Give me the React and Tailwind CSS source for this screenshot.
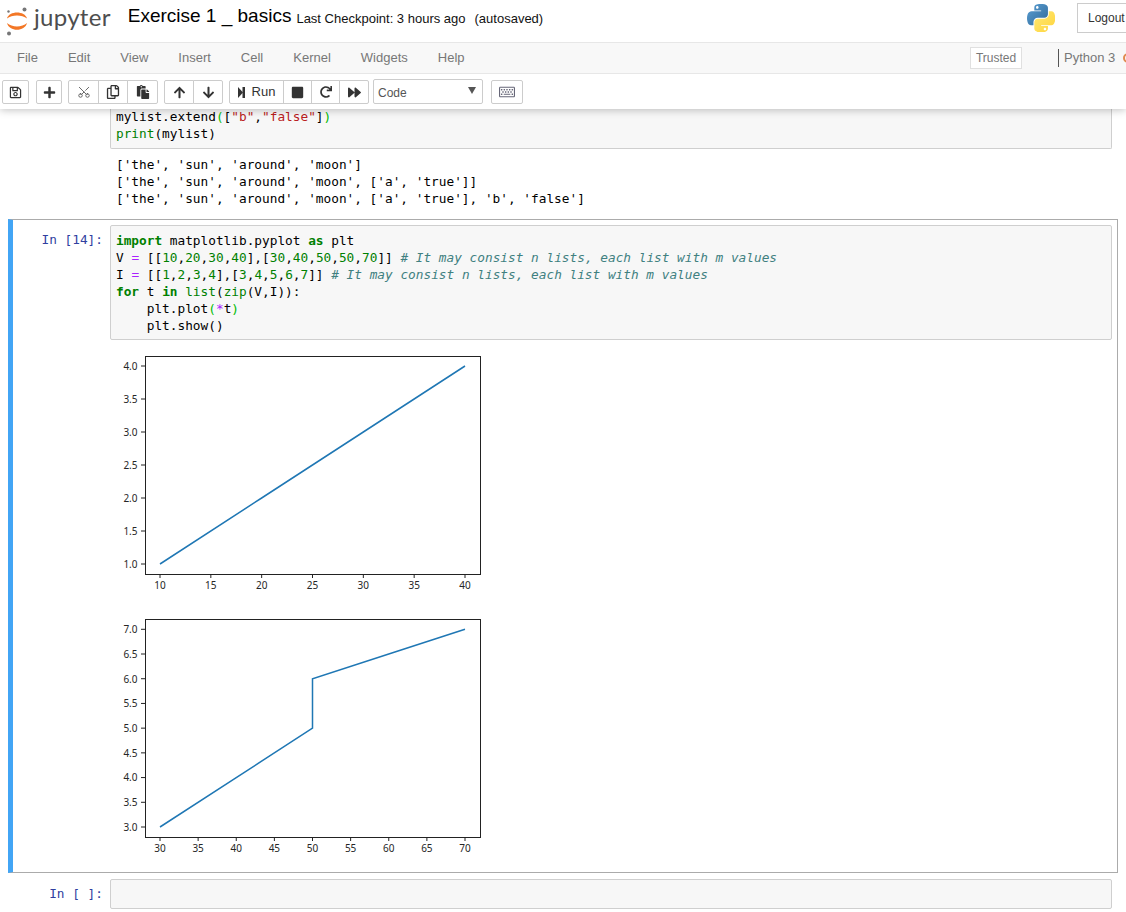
import React from 'react';
import { FaRegSave, FaPlus, FaRegCopy, FaPaste, FaArrowUp, FaArrowDown, FaStop, FaRedo, FaForward, FaRegKeyboard } from 'react-icons/fa';
import { Scissors } from 'lucide-react';

const MENU = ['File', 'Edit', 'View', 'Insert', 'Cell', 'Kernel', 'Widgets', 'Help'];
const sans = 'font-["Liberation_Sans",Arial,sans-serif]';
const mono = 'font-["DejaVu_Sans_Mono",monospace] text-[12.78px] leading-[17px]';
const inputCls = 'border border-[#cfcfcf] bg-[#f7f7f7] rounded-[2px] w-[1002px] px-[5px]';
const promptCls = `${mono} w-[97px] shrink-0 text-right pr-[7px] text-[#303f9f] whitespace-pre`;

const K = ({ children }) => <span className="font-bold text-[#008000]">{children}</span>;
const B = ({ children }) => <span className="text-[#008000]">{children}</span>;
const N = ({ children }) => <span className="text-[#008000]">{children}</span>;
const S = ({ children }) => <span className="text-[#ba2121]">{children}</span>;
const O = ({ children }) => <span className="text-[#aa22ff]">{children}</span>;
const C = ({ children }) => <span className="italic text-[#408080]">{children}</span>;
const M = ({ children }) => <span className="text-[#00bb00]">{children}</span>;

function Btn({ w, children, cls = '' }) {
  return (
    <div className={`h-[24px] flex items-center justify-center border border-[#ccc] bg-white text-[#333] text-[13px] ${w} ${cls}`}>
      {children}
    </div>
  );
}

function JupyterLogo() {
  return (
    <svg width="26" height="30" viewBox="4 2 26 30" className="shrink-0">
      <path d="M7 14.5C9 6.5 25 6.5 27 14.5C22 10.5 12 10.5 7 14.5Z" fill="#f37726" />
      <path d="M7 19C12 23.5 22 23.5 27 19C25 28 9 28 7 19Z" fill="#f37726" />
      <circle cx="24.5" cy="5.5" r="2" fill="#767677" />
      <circle cx="8.5" cy="7.5" r="1.2" fill="#767677" />
      <circle cx="9" cy="29.5" r="2" fill="#767677" />
    </svg>
  );
}

function PythonLogo() {
  return (
    <svg width="28" height="28" viewBox="0 0 110 110" className="shrink-0">
      <defs>
        <linearGradient id="pyBlue" x1="0" y1="0" x2="1" y2="1">
          <stop offset="0" stopColor="#5a9fd4" />
          <stop offset="1" stopColor="#306998" />
        </linearGradient>
        <linearGradient id="pyYellow" x1="0" y1="0" x2="1" y2="1">
          <stop offset="0" stopColor="#ffe873" />
          <stop offset="1" stopColor="#ffd43b" />
        </linearGradient>
      </defs>
      <path fill="url(#pyBlue)" d="M54.919 0.001c-4.584.022-8.961.413-12.812 1.095C30.76 3.1 28.7 7.3 28.7 15.032V25.25h26.813v3.406H18.638c-7.793 0-14.616 4.684-16.75 13.594-2.462 10.213-2.571 16.586 0 27.25 1.906 7.938 6.458 13.594 14.25 13.594h9.219v-12.25c0-8.85 7.657-16.656 16.75-16.656h26.781c7.455 0 13.406-6.138 13.406-13.625V15.032c0-7.266-6.13-12.725-13.406-13.937C64.282.328 59.502-.02 54.919.001zM40.419 8.22c2.77 0 5.031 2.299 5.031 5.125 0 2.816-2.262 5.094-5.031 5.094-2.78 0-5.031-2.278-5.031-5.094 0-2.826 2.252-5.125 5.031-5.125z" />
      <path fill="url(#pyYellow)" d="M85.638 28.657v11.906c0 9.231-7.826 17-16.75 17H42.107c-7.336 0-13.406 6.278-13.406 13.625v25.531c0 7.266 6.319 11.54 13.406 13.625 8.487 2.496 16.626 2.947 26.781 0 6.75-1.954 13.406-5.888 13.406-13.625V86.5H55.513v-3.406h40.187c7.793 0 10.696-5.436 13.406-13.594 2.8-8.399 2.68-16.476 0-27.25-1.926-7.757-5.604-13.594-13.406-13.594zM70.575 93.313c2.78 0 5.031 2.278 5.031 5.094 0 2.826-2.252 5.125-5.031 5.125-2.77 0-5.031-2.299-5.031-5.125 0-2.816 2.262-5.094 5.031-5.094z" />
    </svg>
  );
}

function Plot({ xTicks, yTicks, line, bottom, yTop, yBottom, cls }) {
  // coordinates are pixels inside a 380 wide picture, axes box starts at x=35
  const xPos = v => 50 + ((v - xTicks[0]) / (xTicks[xTicks.length - 1] - xTicks[0])) * 305;
  const yPos = v => yBottom + ((v - yTicks[0]) / (yTicks[yTicks.length - 1] - yTicks[0])) * (yTop - yBottom);
  return (
    <svg width="380" height={bottom + 22} className={`block ${cls}`}>
      <polyline
        points={line.map(([x, y]) => `${xPos(x)},${yPos(y)}`).join(' ')}
        fill="none"
        stroke="#1f77b4"
        strokeWidth="1.5"
      />
      <rect x="35.5" y="0.5" width="335" height={bottom} fill="none" stroke="#222" strokeWidth="1" />
      {xTicks.map(v => (
        <g key={v}>
          <line x1={xPos(v)} x2={xPos(v)} y1={bottom + 0.5} y2={bottom + 4} stroke="#222" />
          <text x={xPos(v)} y={bottom + 15} textAnchor="middle" fontSize="10" fill="#262626" fontFamily="Noto Sans, sans-serif">{v}</text>
        </g>
      ))}
      {yTicks.map(v => (
        <g key={v}>
          <line x1="31" x2="35.5" y1={yPos(v)} y2={yPos(v)} stroke="#222" />
          <text x="27.5" y={yPos(v) + 3.9} textAnchor="end" fontSize="10" fill="#262626" fontFamily="Noto Sans, sans-serif">{v.toFixed(1)}</text>
        </g>
      ))}
    </svg>
  );
}

export default function App() {
  return (
    <div className={`w-[1126px] h-[912px] overflow-hidden bg-white relative ${sans}`}>
      <header className="relative z-10 h-[109px] bg-white shadow-[0_1px_8px_rgba(0,0,0,0.25)]">
        <div className="h-[42px] flex items-center pl-[4px] relative">
          <JupyterLogo />
          <span className='font-["Lato",sans-serif] text-[24px] leading-none text-[#4e4e4e] ml-[4px] tracking-[0.3px] mb-[9px]'>jupyter</span>
          <span className="ml-[17px] text-[19px] text-black mb-[9px]">Exercise 1 _ basics</span>
          <span className="ml-[5px] text-[13px] text-[#111] mb-[5px]">Last Checkpoint: 3 hours ago</span>
          <span className="ml-[9px] text-[13px] text-[#111] mb-[5px]">(autosaved)</span>
          <div className="ml-auto flex items-center mb-[6px] shrink-0 -mr-[6px]">
            <PythonLogo />
            <div className="ml-[22px] w-[55px] h-[30px] pl-[10px] flex items-center border border-[#ccc] bg-white text-[12px] text-[#333]">Logout</div>
          </div>
        </div>
        <nav className="h-[32px] bg-[#f8f8f8] border-y border-[#e7e7e7] flex items-center pl-[17px] text-[#777] text-[13px]">
          <div className="flex gap-[30px]">
            {MENU.map(m => <span key={m}>{m}</span>)}
          </div>
          <div className="ml-auto flex items-center">
            <div className="w-[52px] h-[22px] flex items-center justify-center border border-[#e0e0e0] bg-white text-[12px]">Trusted</div>
            <div className="ml-[36px] h-[18px] border-l border-[#555] pl-[5px] flex items-center w-[65px]">Python 3</div>
            <div className="w-[10px] h-[10px] rounded-full border-2 border-[#e08a4f] shrink-0 -mr-[7px]" />
          </div>
        </nav>
        <div className="h-[35px] flex items-start pt-[6px] pl-[2px]">
          <Btn w="w-[27px]" cls="rounded-[2px]"><FaRegSave size={13} /></Btn>
          <Btn w="w-[26px]" cls="ml-[7px] rounded-[2px]"><FaPlus size={13} /></Btn>
          <div className="ml-[6px] flex">
            <Btn w="w-[31px]" cls="rounded-l-[2px]"><Scissors size={14} strokeWidth={1.5} className="text-[#555] -rotate-90" /></Btn>
            <Btn w="w-[30px]" cls="-ml-px"><FaRegCopy size={14} /></Btn>
            <Btn w="w-[31px]" cls="-ml-px rounded-r-[2px]"><FaPaste size={14} /></Btn>
          </div>
          <div className="ml-[6px] flex">
            <Btn w="w-[30px]" cls="rounded-l-[2px]"><FaArrowUp size={13} /></Btn>
            <Btn w="w-[30px]" cls="-ml-px rounded-r-[2px]"><FaArrowDown size={13} /></Btn>
          </div>
          <div className="ml-[6px] flex">
            <Btn w="w-[55px]" cls="gap-[7px] rounded-l-[2px]">
              <svg width="7" height="11" viewBox="0 0 7 11"><path d="M0 0L5 5.5L0 11Z" fill="#333" /><rect x="4.5" width="2.5" height="11" fill="#333" /></svg>
              Run
            </Btn>
            <Btn w="w-[29px]" cls="-ml-px"><FaStop size={13} /></Btn>
            <Btn w="w-[29px]" cls="-ml-px"><FaRedo size={12} /></Btn>
            <Btn w="w-[30px]" cls="-ml-px rounded-r-[2px]"><FaForward size={13} /></Btn>
          </div>
          <div className="ml-[4px] -mt-[1px] w-[110px] h-[25px] border border-[#ccc] rounded-[2px] bg-white flex items-center pl-[4px] pt-[2px] text-[12px] text-[#555]">
            Code
            <svg width="8" height="7" viewBox="0 0 8 7" className="ml-auto mr-[6px] mb-[4px]"><path d="M0 0H8L4 7Z" fill="#555" /></svg>
          </div>
          <Btn w="w-[32px]" cls="ml-[8px] rounded-[2px]"><FaRegKeyboard size={16} className="text-[#667]" /></Btn>
        </div>
      </header>

      <main className="text-[#000]">
        {/* scrolled cell, its first line sits partly under the header */}
        <div className="ml-[110px] w-[1002px] h-[40px] overflow-hidden flex flex-col justify-end border border-t-0 border-[#cfcfcf] bg-[#f7f7f7] rounded-b-[2px] px-[5px] pb-[6px]">
          <pre className={mono}>mylist.extend<M>(</M>[<S>"b"</S>,<S>"false"</S>]<M>)</M>{'\n'}<B>print</B>(mylist)</pre>
        </div>
        <pre className={`${mono} ml-[116px] mt-[7px] h-[51px] text-black`}>
          {`['the', 'sun', 'around', 'moon']\n['the', 'sun', 'around', 'moon', ['a', 'true']]\n['the', 'sun', 'around', 'moon', ['a', 'true'], 'b', 'false']`}
        </pre>

        <section className="ml-[8px] mt-[12px] w-[1110px] h-[654px] border border-[#ababab] border-l-[5px] border-l-[#42a5f5] pt-[5px]">
          <div className="flex">
            <div className={`${promptCls} pt-[6px]`}>In [14]:</div>
            <div className={`${inputCls} h-[115px] pt-[6px]`}>
              <pre className={mono}>
                <K>import</K> matplotlib.pyplot <K>as</K> plt{'\n'}
                V <O>=</O> [[<N>10</N>,<N>20</N>,<N>30</N>,<N>40</N>],[<N>30</N>,<N>40</N>,<N>50</N>,<N>50</N>,<N>70</N>]] <C># It may consist n lists, each list with m values</C>{'\n'}
                I <O>=</O> [[<N>1</N>,<N>2</N>,<N>3</N>,<N>4</N>],[<N>3</N>,<N>4</N>,<N>5</N>,<N>6</N>,<N>7</N>]] <C># It may consist n lists, each list with m values</C>{'\n'}
                <K>for</K> t <K>in</K> <B>list</B>(<B>zip</B>(V,I)):{'\n'}
                {'    '}plt.plot<M>(</M><O>*</O>t<M>)</M>{'\n'}
                {'    '}plt.show()
              </pre>
            </div>
          </div>
          <div className="ml-[97px] mt-[16px]">
            <Plot
              xTicks={[10, 15, 20, 25, 30, 35, 40]}
              yTicks={[1, 1.5, 2, 2.5, 3, 3.5, 4]}
              line={[[10, 1], [20, 2], [30, 3], [40, 4]]}
              bottom={218}
              yTop={10}
              yBottom={208}
            />
            <Plot
              xTicks={[30, 35, 40, 45, 50, 55, 60, 65, 70]}
              yTicks={[3, 3.5, 4, 4.5, 5, 5.5, 6, 6.5, 7]}
              line={[[30, 3], [40, 4], [50, 5], [50, 6], [60, 6.5], [70, 7]]}
              bottom={218}
              yTop={10.3}
              yBottom={208}
              cls="mt-[23px]"
            />
          </div>
        </section>

        <div className="flex ml-[8px] mt-[6px] border-l-[5px] border-transparent">
          <div className={`${promptCls} leading-[30px]`}>In [ ]:</div>
          <div className={`${inputCls} h-[30px]`} />
        </div>
      </main>
    </div>
  );
}
